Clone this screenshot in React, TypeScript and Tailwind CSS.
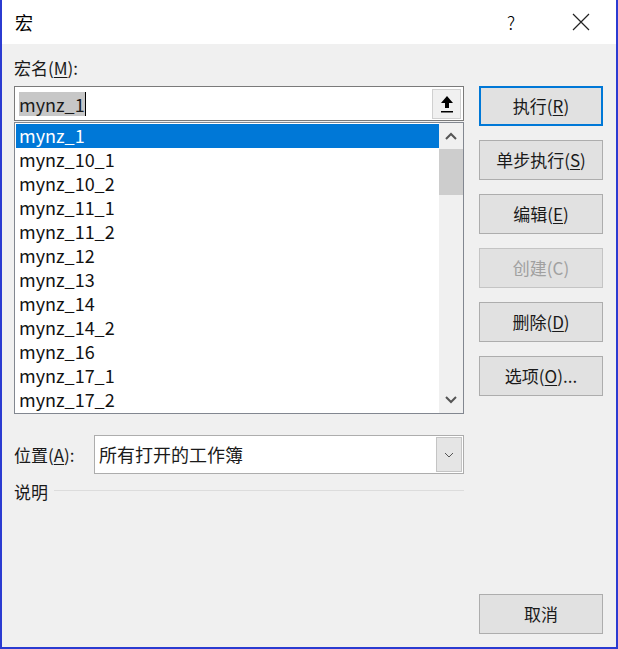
import React from "react";

const items = [
  "mynz_1",
  "mynz_10_1",
  "mynz_10_2",
  "mynz_11_1",
  "mynz_11_2",
  "mynz_12",
  "mynz_13",
  "mynz_14",
  "mynz_14_2",
  "mynz_16",
  "mynz_17_1",
  "mynz_17_2",
];

const font = { fontFamily: '"Noto Sans CJK SC", "Noto Sans", sans-serif' };

function Btn({ children, primary, disabled }: { children: React.ReactNode; primary?: boolean; disabled?: boolean }) {
  return (
    <div
      className={
        "flex h-[40px] w-[124px] items-center justify-center bg-[#e1e1e1] text-[17px] " +
        (primary ? "border-2 border-[#0078d7] " : "border border-[#adadad] ") +
        (disabled ? "text-[#a0a0a0] border-[#c4c4c4]" : "text-[#1a1a1a]")
      }
    >
      {children}
    </div>
  );
}

export default function App() {
  return (
    <div className="h-[649px] w-[618px] overflow-hidden bg-white" style={font}>
      <div className="flex h-full w-full flex-col border-x-2 border-b-2 border-[#2b3bd1]">
        {/* title bar */}
        <div className="flex h-[44px] items-center bg-white pl-[13px] text-[18px] text-black">
          <span className="flex-1">宏</span>
          <span className="mr-[57px] text-[18px] font-light">?</span>
          <svg width="18" height="18" viewBox="0 0 18 18" className="mr-[26px]">
            <path d="M1 1 L17 17 M17 1 L1 17" stroke="#222" strokeWidth="1.2" />
          </svg>
        </div>
        {/* body */}
        <div className="flex flex-1 bg-[#f0f0f0] pl-[12px] pr-[12px] text-[#1a1a1a]">
          <div className="flex w-[450px] flex-col">
            <div className="mt-[12px] h-[24px] text-[17px] leading-[24px]">
              宏名(<span className="underline underline-offset-2">M</span>):
            </div>
            <div className="mt-[6px] flex h-[35px] items-center border border-[#7a7a7a] bg-white">
              <div className="flex flex-1 items-center pl-[4px]">
                <span className="bg-[#c7c7c7] text-[18px] leading-[24px]">mynz_1</span>
                <span className="h-[24px] w-px bg-black" />
              </div>
              <div className="mr-[2px] flex h-[30px] w-[29px] items-center justify-center border border-[#d0d0d0] bg-[#f0f0f0]">
                <svg width="14" height="18" viewBox="0 0 14 18">
                  <path d="M7 1 L13 8 L9 8 L9 13 L5 13 L5 8 L1 8 Z" fill="#000" />
                  <rect x="1" y="16" width="12" height="1.5" fill="#000" />
                </svg>
              </div>
            </div>
            <div className="mt-[1px] flex h-[292px] border border-[#828790] bg-white">
              <div className="flex-1 pt-[1px] pl-[1px]">
                {items.map((it, i) => (
                  <div
                    key={it}
                    className={
                      "h-[24px] pl-[3px] text-[18px] leading-[22px] " +
                      (i === 0 ? "bg-[#0078d7] text-white" : "text-[#111]")
                    }
                  >
                    {it}
                  </div>
                ))}
              </div>
              <div className="flex w-[24px] flex-col bg-[#f0f0f0]">
                <div className="flex h-[26px] items-center justify-center">
                  <svg width="12" height="8" viewBox="0 0 12 8">
                    <path d="M1 7 L6 2 L11 7" stroke="#555" strokeWidth="2" fill="none" />
                  </svg>
                </div>
                <div className="h-[46px] bg-[#cdcdcd]" />
                <div className="flex-1" />
                <div className="flex h-[26px] items-center justify-center">
                  <svg width="12" height="8" viewBox="0 0 12 8">
                    <path d="M1 1 L6 6 L11 1" stroke="#555" strokeWidth="2" fill="none" />
                  </svg>
                </div>
              </div>
            </div>
            <div className="mt-[21px] flex h-[39px] items-center">
              <div className="w-[80px] text-[17px]">
                位置(<span className="underline underline-offset-2">A</span>):
              </div>
              <div className="flex h-[39px] flex-1 items-center border border-[#adadad] bg-white">
                <span className="flex-1 pl-[4px] text-[18px]">所有打开的工作簿</span>
                <div className="mr-[1px] flex h-[35px] w-[26px] items-center justify-center border border-[#c4c4c4] bg-[#e5e5e5]">
                  <svg width="10" height="6" viewBox="0 0 10 6">
                    <path d="M1 1 L5 5 L9 1" stroke="#555" strokeWidth="1" fill="none" />
                  </svg>
                </div>
              </div>
            </div>
            <div className="mt-[4px] flex items-center">
                <span className="text-[17px] leading-[28px]">说明</span>
                <div className="ml-[6px] mt-[-3px] h-px flex-1 bg-[#dcdcdc]" />
            </div>
          </div>
          <div className="ml-[15px] flex flex-col gap-[14px] pt-[42px]">
            <Btn primary>
              执行(<span className="underline underline-offset-2">R</span>)
            </Btn>
            <Btn>
              单步执行(<span className="underline underline-offset-2">S</span>)
            </Btn>
            <Btn>
              编辑(<span className="underline underline-offset-2">E</span>)
            </Btn>
            <Btn disabled>创建(C)</Btn>
            <Btn>
              删除(<span className="underline underline-offset-2">D</span>)
            </Btn>
            <Btn>
              选项(<span className="underline underline-offset-2">O</span>)...
            </Btn>
            <div className="flex-1" />
            <div className="mb-[13px]">
              <Btn>取消</Btn>
            </div>
          </div>
        </div>
      </div>
    </div>
  );
}
